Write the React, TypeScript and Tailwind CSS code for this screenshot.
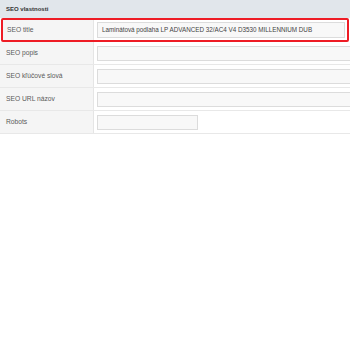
export default function App() {
  const rows = [
    { label: "SEO popis", short: false },
    { label: "SEO kľúčové slová", short: false },
    { label: "SEO URL názov", short: false },
    { label: "Robots", short: true },
  ];

  return (
    <div className="w-[350px] h-[350px] bg-white overflow-hidden font-['Liberation_Sans',Arial,sans-serif] text-[6.7px] text-[#5a5a5a]">
      <div className="h-[18px] bg-[#e1e6eb] flex items-center pl-[6px] font-bold text-[#333] text-[6px]">
        SEO vlastnosti
      </div>
      <div className="border-[2.5px] border-[#ee1c25] rounded-[2px] mx-[1px] flex h-[24px]">
        <div className="w-[91px] shrink-0 bg-[#f5f5f5] border-r border-[#e5e5e5] flex items-center pl-[4px]">
          SEO title
        </div>
        <div className="flex-1 flex items-center pl-[3px] pr-[2px]">
          <div className="h-[16px] w-full border border-[#dcdcdc] bg-[#f8f8f8] flex items-center pl-[4px] text-[6.3px] text-[#444] whitespace-nowrap">
            Laminátová podlaha LP ADVANCED 32/AC4 V4 D3530 MILLENNIUM DUB
          </div>
        </div>
      </div>
      {rows.map((r) => (
        <div key={r.label} className="flex h-[23px] border-b border-[#e8e8e8]">
          <div className="w-[94px] shrink-0 bg-[#f5f5f5] border-r border-[#e5e5e5] flex items-center pl-[6px]">
            {r.label}
          </div>
          <div className="flex-1 flex items-center pl-[3px] overflow-hidden">
            <div
              className={
                r.short
                  ? "h-[15px] w-[101px] shrink-0 border border-[#dcdcdc] bg-[#f8f8f8]"
                  : "h-[15px] w-[260px] shrink-0 border border-[#dcdcdc] bg-[#f8f8f8]"
              }
            />
          </div>
        </div>
      ))}
    </div>
  );
}
